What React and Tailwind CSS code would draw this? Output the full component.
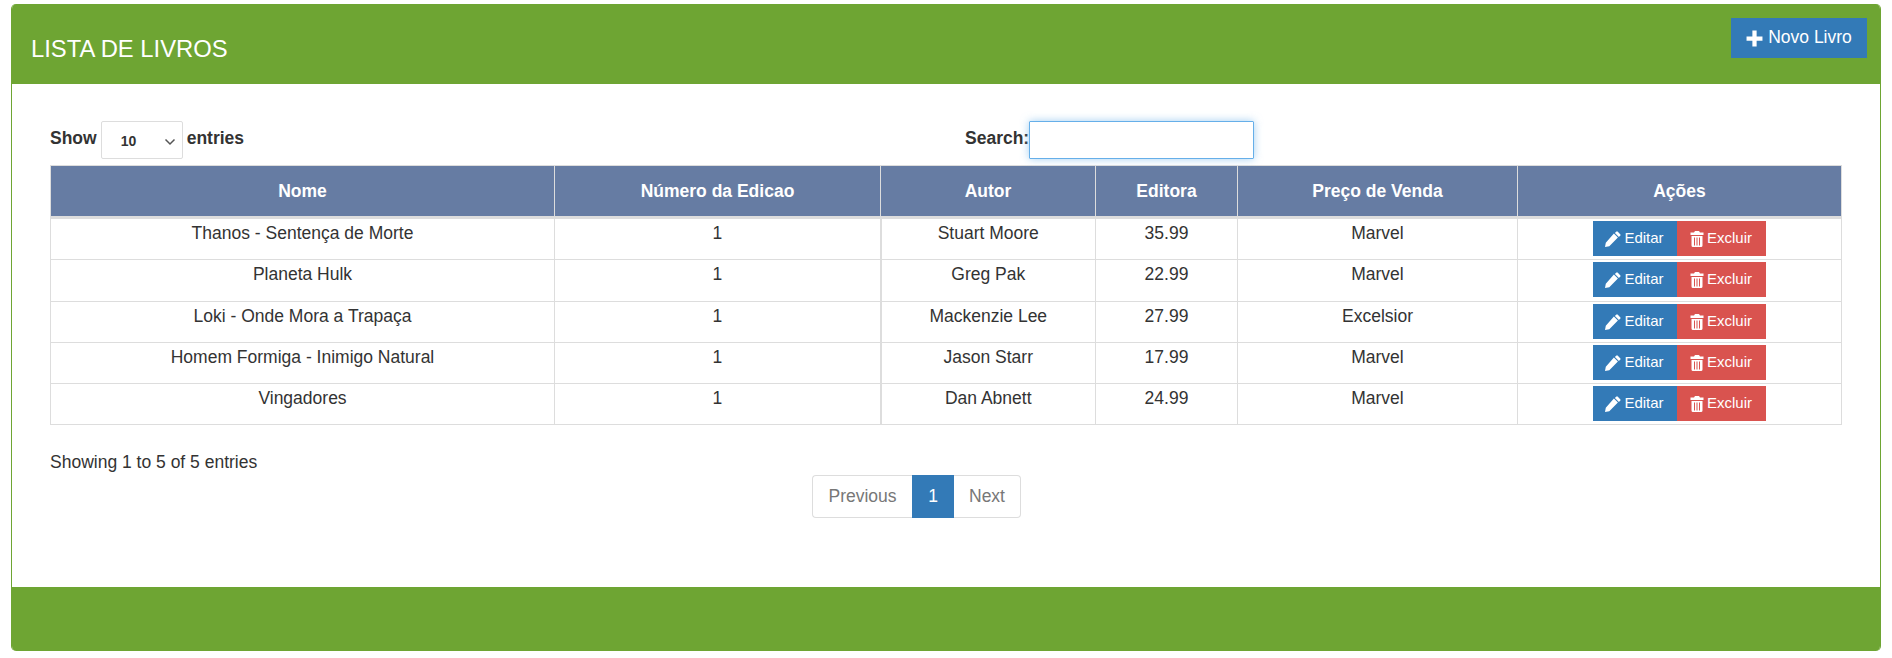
const BOOKS = [
  { nome: 'Thanos - Sentença de Morte', edicao: 1, autor: 'Stuart Moore', preco: '35.99', editora: 'Marvel' },
  { nome: 'Planeta Hulk', edicao: 1, autor: 'Greg Pak', preco: '22.99', editora: 'Marvel' },
  { nome: 'Loki - Onde Mora a Trapaça', edicao: 1, autor: 'Mackenzie Lee', preco: '27.99', editora: 'Excelsior' },
  { nome: 'Homem Formiga - Inimigo Natural', edicao: 1, autor: 'Jason Starr', preco: '17.99', editora: 'Marvel' },
  { nome: 'Vingadores', edicao: 1, autor: 'Dan Abnett', preco: '24.99', editora: 'Marvel' },
]

const COLUMNS = [
  { label: 'Nome', width: 'w-[504px]' },
  { label: 'Número da Edicao', width: 'w-[326px]' },
  { label: 'Autor', width: 'w-[215px]' },
  { label: 'Editora', width: 'w-[142px]' },
  { label: 'Preço de Venda', width: 'w-[280px]' },
  { label: 'Ações', width: 'w-[324px]' },
]

function PlusIcon() {
  return (
    <svg viewBox="0 0 16 16" className="w-[17px] h-[17px] fill-white shrink-0">
      <path d="M6 0.5h4v5.5h5.5v4H10v5.5H6V10H0.5V6H6z" />
    </svg>
  )
}

function PencilIcon() {
  return (
    <svg viewBox="0 0 16 16" className="w-[16px] h-[16px] fill-white shrink-0">
      <path d="M12.6 0.6l2.8 2.8a1 1 0 0 1 0 1.2l-1.5 1.5-4-4 1.5-1.5a1 1 0 0 1 1.2 0zM8.9 2.6l4 4-8.6 8.6L0 16l0.8-4.3z" />
    </svg>
  )
}

function TrashIcon() {
  return (
    <svg viewBox="0 0 14 16" className="w-[14px] h-[16px] fill-white shrink-0">
      <path d="M5 0h4l1 1.5h3.5V4H0.5V1.5H4zM1.5 5h11v9.5a1.5 1.5 0 0 1-1.5 1.5H3a1.5 1.5 0 0 1-1.5-1.5zM4 6.5v8h1v-8zM6.5 6.5v8h1v-8zM9 6.5v8h1v-8z" />
    </svg>
  )
}

export default function App() {
  return (
    <div className="h-[658px] bg-white pt-[4px] px-[11px] font-['Liberation_Sans',Arial,sans-serif] text-[17.5px] text-[#333]">
      <div className="h-[647px] flex flex-col rounded-[5px] overflow-hidden border-x border-[#6ea533]">
        {/* Panel heading */}
        <div className="h-[80px] shrink-0 bg-[#6ea533] flex items-start justify-between pl-[19px] pr-[13px] pt-[14px]">
          <h1 className="mt-[16px] text-[23.8px] leading-[30px] text-white">LISTA DE LIVROS</h1>
          <button className="h-[40px] w-[136px] bg-[#337ab7] text-white flex items-center justify-center gap-[5px]">
            <PlusIcon />
            <span className="-mt-[2px]">Novo Livro</span>
          </button>
        </div>

        {/* Panel body */}
        <div className="flex-1 px-[38px] pt-[37px]">
          <div className="grid grid-cols-2 h-[38px] font-bold">
            <div className="flex items-center gap-[4px]">
              <span className="-mt-[4px]">Show</span>
              <div className="relative w-[82px] h-[38px] border border-[#ddd] rounded-[2px] flex items-center pl-[19px] text-[14px]">
                <span className="mt-[2px]">10</span>
                <svg viewBox="0 0 12 8" className="absolute right-[6px] top-[16px] w-[12px] h-[8px] fill-none stroke-[#555] stroke-[1.5]">
                  <path d="M1.5 1.5L6 6l4.5-4.5" />
                </svg>
              </div>
              <span className="-mt-[4px]">entries</span>
            </div>
            <div className="flex items-center pl-[19px]">
              <span className="-mt-[4px]">Search:</span>
              <input className="w-[225px] h-[38px] border border-[#66afe9] outline-none rounded-[1px] shadow-[0_0_8px_rgba(102,175,233,0.6)]" />
            </div>
          </div>

          <table className="mt-[6px] w-[1791px] table-fixed border-collapse">
            <thead>
              <tr className="bg-[#667ca3] text-white">
                {COLUMNS.map((col) => (
                  <th key={col.label} className={`${col.width} h-[52px] border-x border-t border-[#ddd] border-b-[3px] font-bold text-center`}>
                    {col.label}
                  </th>
                ))}
              </tr>
            </thead>
            <tbody>
              {BOOKS.map((book) => (
                <tr key={book.nome} className="h-[41px] first:h-[42px] nth-2:h-[42px]">
                  <td className="border border-[#ddd] text-center align-top pt-[2px] leading-[24px]">{book.nome}</td>
                  <td className="border border-r-2 border-[#ddd] text-center align-top pt-[2px] leading-[24px]">{book.edicao}</td>
                  <td className="border border-[#ddd] text-center align-top pt-[2px] leading-[24px]">{book.autor}</td>
                  <td className="border border-[#ddd] text-center align-top pt-[2px] leading-[24px]">{book.preco}</td>
                  <td className="border border-[#ddd] text-center align-top pt-[2px] leading-[24px]">{book.editora}</td>
                  <td className="border border-[#ddd] align-top pt-[2px] pb-0 px-0">
                    <div className="flex justify-center pr-[1px] text-[15px] text-white">
                      <button className="w-[84px] h-[35px] bg-[#337ab7] flex items-center justify-center gap-[3px]">
                        <PencilIcon />
                        Editar
                      </button>
                      <button className="w-[89px] h-[35px] bg-[#d9534f] flex items-center justify-center gap-[3px]">
                        <TrashIcon />
                        Excluir
                      </button>
                    </div>
                  </td>
                </tr>
              ))}
            </tbody>
          </table>

          <div className="mt-[25px] leading-[24px]">Showing 1 to 5 of 5 entries</div>

          <div className="flex justify-center mt-[1px] pr-[59px]">
            <div className="flex h-[43px] text-[#777]">
              <span className="w-[100px] flex items-center justify-center border border-[#ddd] border-r-0 rounded-l-[4px]">Previous</span>
              <span className="w-[42px] flex items-center justify-center bg-[#337ab7] text-white">1</span>
              <span className="w-[67px] flex items-center justify-center border border-[#ddd] border-l-0 rounded-r-[4px]">Next</span>
            </div>
          </div>
        </div>

        {/* Panel footer */}
        <div className="h-[64px] shrink-0 bg-[#6ea533]" />
      </div>
    </div>
  )
}
